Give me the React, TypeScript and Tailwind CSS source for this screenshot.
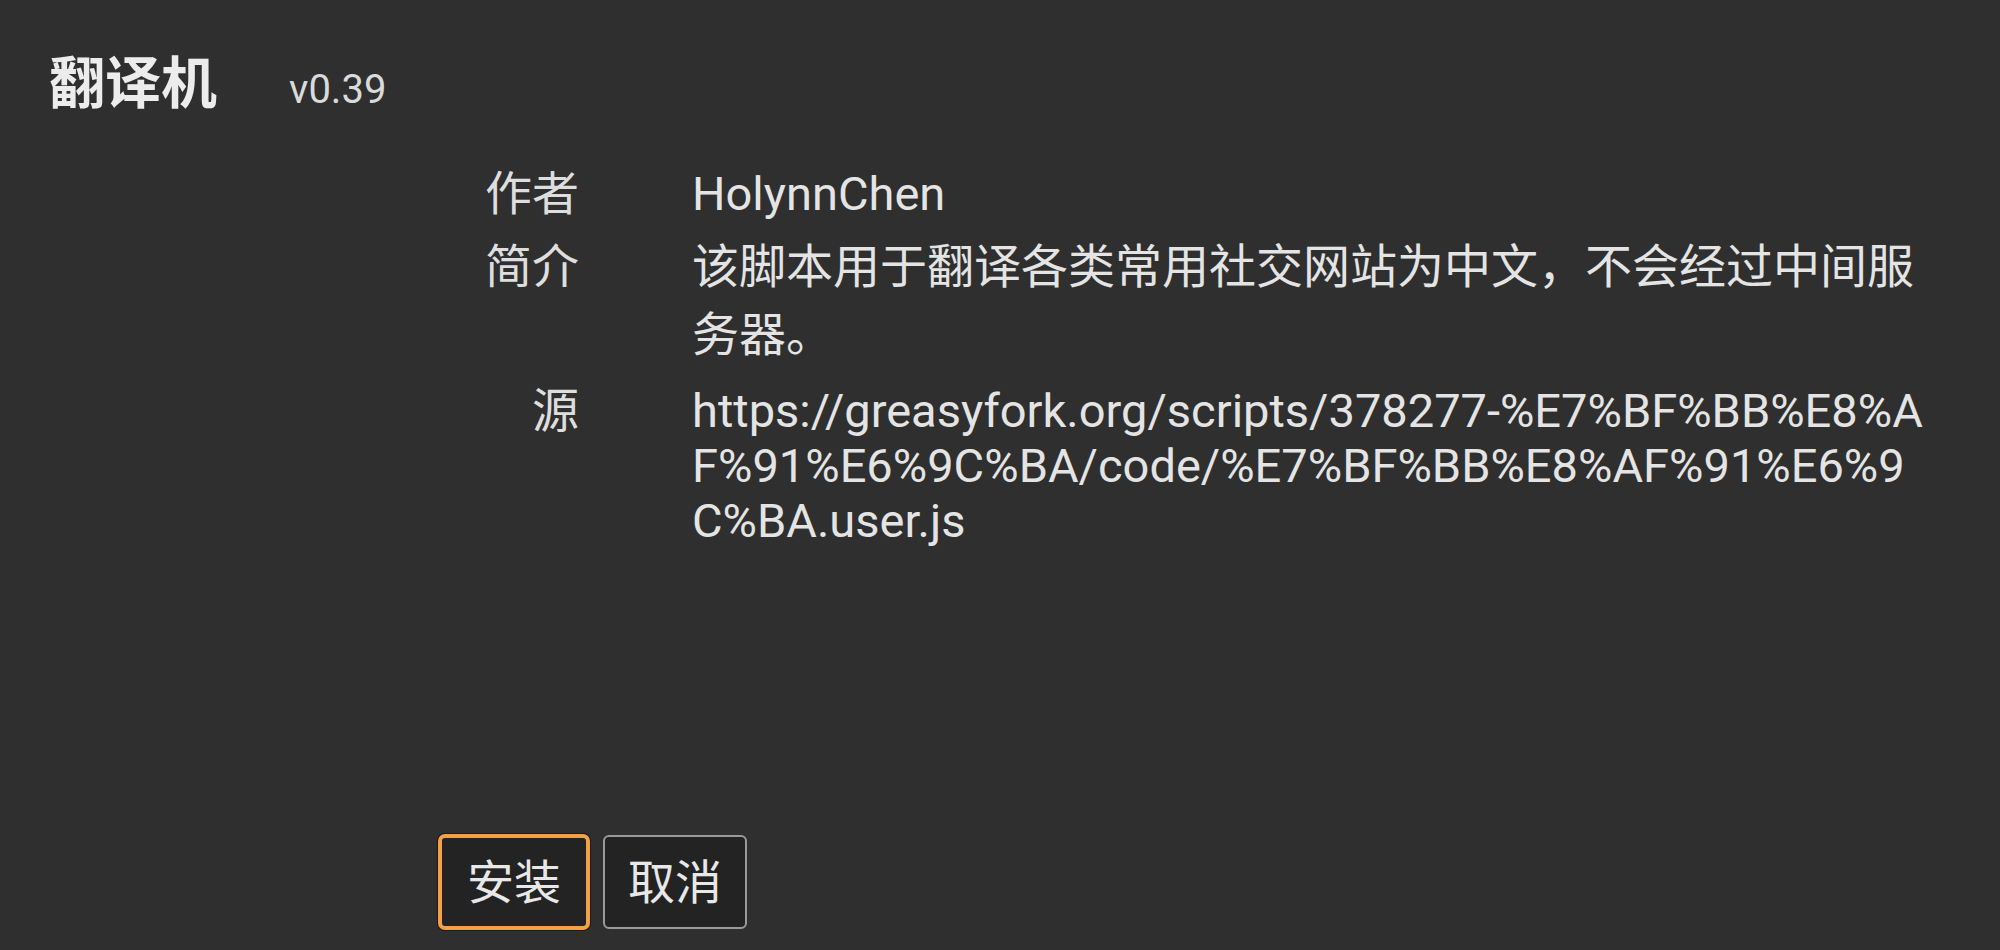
export default function App() {
  return (
    <div className="min-h-screen flex flex-col bg-[#2f2f2f] text-[#e4e4e4] font-[family-name:Roboto,'Noto_Sans_CJK_SC',sans-serif]">
      <header className="flex items-baseline pl-[49px] pt-[56px]">
        <h1 className="text-[56px] leading-[56px] font-bold text-[#ececec]">翻译机</h1>
        <span className="ml-[72px] text-[40px] leading-[40px] text-[#dadada]">v0.39</span>
      </header>

      <div className="ml-[438px] mt-[48px] grid grid-cols-[141px_1232px] gap-x-[113px] gap-y-[5px] items-baseline text-[47px]">
        <div className="text-right leading-[68px] text-[#dedede]">作者</div>
        <div className="leading-[68px]">HolynnChen</div>

        <div className="text-right leading-[68px] text-[#dedede]">简介</div>
        <div className="leading-[68px]">该脚本用于翻译各类常用社交网站为中文，不会经过中间服务器。</div>

        <div className="mt-[3px] text-right leading-[68px] text-[#dedede]">源</div>
        <div className="leading-[55px] break-all">
          https://greasyfork.org/scripts/378277-%E7%BF%BB%E8%AF%91%E6%9C%BA/code/%E7%BF%BB%E8%AF%91%E6%9C%BA.user.js
        </div>
      </div>

      <div className="mt-auto ml-[438px] pb-[20px] flex items-center gap-[13px] text-[47px]">
        <button
          type="button"
          className="w-[152px] h-[96px] flex items-center justify-center rounded-[7px] border-[4px] border-[#f2a146] bg-[#232323] text-[#e8e8e8] leading-[55px] shadow-[0_0_0_1px_#1b1b1b]"
        >
          安装
        </button>
        <button
          type="button"
          className="w-[144px] h-[94px] flex items-center justify-center rounded-[6px] border-[2px] border-[#9a9a9a] bg-[#232323] text-[#e8e8e8] leading-[55px]"
        >
          取消
        </button>
      </div>
    </div>
  );
}
